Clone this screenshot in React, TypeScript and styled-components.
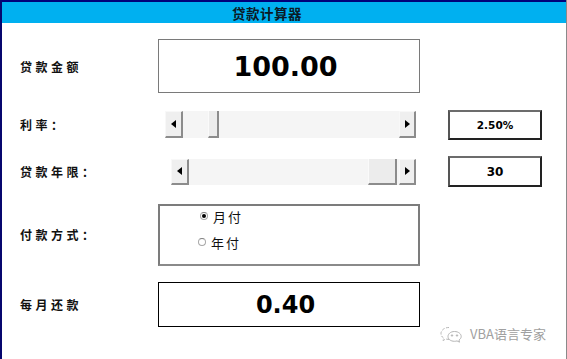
import styled, { createGlobalStyle } from 'styled-components';

const GlobalStyle = createGlobalStyle`
  html, body {
    margin: 0;
    padding: 0;
    background: #ffffff;
  }
`;

const cjk = `'Noto Sans CJK SC', 'Noto Sans', sans-serif`;
const num = `'DejaVu Sans', 'Liberation Sans', sans-serif`;

export default function App() {
  return (
    <>
      <GlobalStyle />
      <Frame>
        <TitleBar>
          <Title>贷款计算器</Title>
        </TitleBar>
        <Body>
          <Label>贷款金额</Label>
          <BigBox $tone='gray' $size={27}>100.00</BigBox>
          <span />
          <span />

          <Label>利率：</Label>
          <ScrollBar $inset={7} $height={27} $thumbAt={25} $thumbWidth={11} />
          <span />
          <ValueBox $size={10.5}>2.50%</ValueBox>

          <Label>贷款年限：</Label>
          <ScrollBar $inset={13} $height={26} $thumbAt={179} $thumbWidth={29} />
          <span />
          <ValueBox $size={12}>30</ValueBox>

          <Label>付款方式：</Label>
          <GroupBox>
            <RadioRow $indent={2}>
              <Radio $checked />
              <RadioText>月付</RadioText>
            </RadioRow>
            <RadioRow $indent={0}>
              <Radio />
              <RadioText>年付</RadioText>
            </RadioRow>
          </GroupBox>
          <span />
          <span />

          <Label>每月还款</Label>
          <BigBox $tone='black' $size={24}>0.40</BigBox>
          <span />
          <span />
        </Body>
        <Watermark>
          <WeChatMark />
          <span>VBA语言专家</span>
        </Watermark>
      </Frame>
    </>
  );
}

function ScrollBar({ $inset, $height, $thumbAt, $thumbWidth }: { $inset: number; $height: number; $thumbAt: number; $thumbWidth: number }) {
  return (
    <Bar $inset={$inset} $height={$height}>
      <ArrowButton $w={18}>
        <svg width='5' height='8' viewBox='0 0 5 8'><polygon points='5,0 0,4 5,8' fill='#000' /></svg>
      </ArrowButton>
      <Track>
        <Thumb style={{ left: $thumbAt, width: $thumbWidth }} />
      </Track>
      <ArrowButton $w={17}>
        <svg width='5' height='8' viewBox='0 0 5 8'><polygon points='0,0 5,4 0,8' fill='#000' /></svg>
      </ArrowButton>
    </Bar>
  );
}

function WeChatMark() {
  return (
    <svg width='26' height='18' viewBox='0 0 26 18' fill='none' stroke='#b5b5b5' strokeWidth='1'>
      <path d='M10 2.5 C5 2.5 2 5.5 2 8.5 C2 10.5 3 12 4.5 13 L4 15.5 L6.8 14 C7.8 14.3 8.8 14.4 10 14.4' strokeDasharray='3 1.5' />
      <path d='M15.5 6.5 C11.5 6.5 9 9 9 11.5 C9 14 11.5 16.3 15.5 16.3 C16.4 16.3 17.2 16.2 18 15.9 L20.5 17.2 L20 15 C21.4 14 22.2 12.8 22.2 11.5 C22.2 9 19.6 6.5 15.5 6.5 Z' />
      <circle cx='13' cy='10.5' r='0.7' fill='#b5b5b5' />
      <circle cx='18' cy='10.5' r='0.7' fill='#b5b5b5' />
    </svg>
  );
}

const Frame = styled.div`
  position: relative;
  width: 567px;
  height: 359px;
  box-sizing: border-box;
  border-left: 2px solid #06066e;
  border-right: 1px solid #8a8a8a;
  overflow: hidden;
  background: #ffffff;
`;

const TitleBar = styled.div`
  height: 21px;
  border-top: 2px solid #00007a;
  background: #00b0f0;
  display: flex;
  align-items: center;
  justify-content: center;
  padding-right: 34px;
`;

const Title = styled.div`
  font-family: ${cjk};
  font-weight: 700;
  font-size: 13.5px;
  color: #0b1a26;
  letter-spacing: 0.5px;
`;

const Body = styled.div`
  display: grid;
  grid-template-columns: 138px 262px 28px 94px;
  grid-template-rows: 54px 30px 31px 62px 45px;
  row-gap: 16.5px;
  padding: 16px 0 0 18px;
  align-items: center;
`;

const Label = styled.div`
  font-family: ${cjk};
  font-weight: 700;
  font-size: 12px;
  letter-spacing: 3.5px;
  color: #111;
`;

const BigBox = styled.div<{ $tone: 'gray' | 'black'; $size: number }>`
  align-self: stretch;
  box-sizing: border-box;
  border: ${p => (p.$tone === 'gray' ? '1.5px solid #7a7a7a' : '1.5px solid #000')};
  display: flex;
  align-items: center;
  justify-content: center;
  padding-right: 7px;
  font-family: ${num};
  font-weight: 700;
  font-size: ${p => p.$size}px;
  color: #000;
`;

const ValueBox = styled.div`
  align-self: stretch;
  box-sizing: border-box;
  border: 2px solid #222;
  border-top-color: #6c6c6c;
  border-left-color: #555;
  display: flex;
  align-items: center;
  justify-content: center;
  font-family: ${num};
  font-weight: 700;
  font-size: ${(p: { $size: number }) => p.$size}px;
  color: #000;
`;

const Bar = styled.div<{ $inset: number; $height: number }>`
  display: flex;
  height: ${p => p.$height}px;
  margin-left: ${p => p.$inset}px;
  margin-right: 4px;
  background: #f4f4f4;
`;

const ArrowButton = styled.div<{ $w: number }>`
  width: ${p => p.$w}px;
  flex: none;
  box-sizing: border-box;
  background: #efefef;
  border-right: 2px solid #8c8c8c;
  border-bottom: 2px solid #8c8c8c;
  border-top: 1px solid #f8f8f8;
  border-left: 1px solid #f8f8f8;
  display: flex;
  align-items: center;
  justify-content: center;
`;

const Track = styled.div`
  position: relative;
  flex: 1;
  background: #f5f5f5;
`;

const Thumb = styled.div`
  position: absolute;
  top: 0;
  bottom: 0;
  box-sizing: border-box;
  background: #ececec;
  border-right: 2px solid #8c8c8c;
  border-bottom: 2px solid #8c8c8c;
  border-left: 1px solid #fafafa;
`;

const GroupBox = styled.div`
  align-self: stretch;
  box-sizing: border-box;
  border: 2px solid #7c7c7c;
  border-bottom-color: #8a8a8a;
  display: flex;
  flex-direction: column;
  gap: 7px;
  padding: 1px 0 0 38px;
`;

const RadioRow = styled.div<{ $indent: number }>`
  display: flex;
  align-items: center;
  gap: 5px;
  padding-left: ${p => p.$indent}px;
`;

const Radio = styled.span<{ $checked?: boolean }>`
  width: 8px;
  height: 8px;
  box-sizing: border-box;
  border-radius: 50%;
  border: 1px solid #a8a8a8;
  border-top-color: #808080;
  background: #fff;
  display: flex;
  align-items: center;
  justify-content: center;
  &::after {
    content: '';
    width: 4px;
    height: 4px;
    border-radius: 50%;
    background: ${p => (p.$checked ? '#000' : 'transparent')};
  }
`;

const RadioText = styled.span`
  font-family: ${cjk};
  font-size: 13px;
  letter-spacing: 2px;
  color: #111;
`;

const Watermark = styled.div`
  position: absolute;
  left: 437px;
  top: 324px;
  display: flex;
  align-items: center;
  gap: 5px;
  font-family: ${cjk};
  font-size: 13px;
  color: #a0a0a0;
`;
